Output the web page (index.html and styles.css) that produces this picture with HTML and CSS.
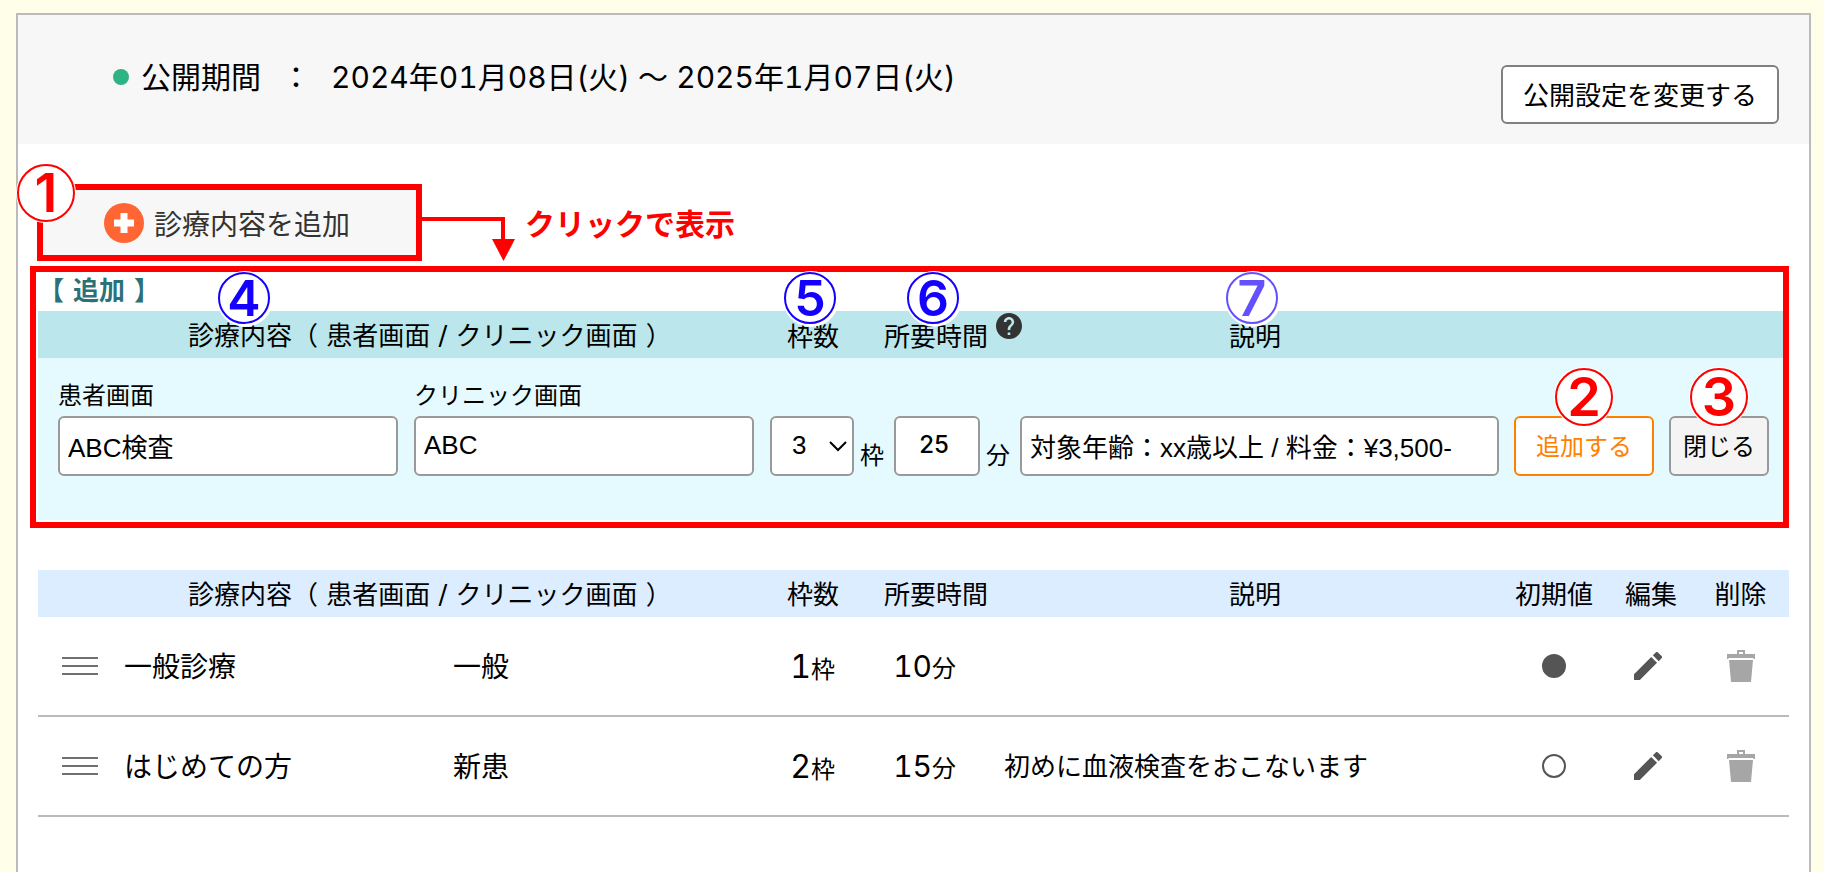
FILE: index.html
```
<!DOCTYPE html>
<html lang="ja">
<head>
    <meta charset="UTF-8">
    <meta name="viewport" content="width=device-width, initial-scale=1.0">
    <title>診療内容の設定</title>
    <link rel="stylesheet" href="styles.css">
</head>
<body>
    <main class="panel">
        <header class="period">
            <p class="period-text">
                <span class="dot"></span>
                <span>公開期間</span>
                <span class="colon">：</span>
                <span class="dates">2024年01月08日(火) 〜 2025年1月07日(火)</span>
            </p>
            <button type="button" class="btn period-btn">公開設定を変更する</button>
        </header>

        <div class="toolbar">
            <div class="add-wrap">
                <button type="button" class="add-btn">
                    <svg class="plus" viewBox="0 0 40 40" aria-hidden="true">
                        <circle cx="20" cy="20" r="20" fill="#ff6633"/>
                        <path d="M16.5 10h7v6.5H30v7h-6.5V30h-7v-6.5H10v-7h6.5z" fill="#fff"/>
                    </svg>
                    <span>診療内容を追加</span>
                </button>
                <span class="badge badge-red badge-add">1</span>
            </div>
            <svg class="arrow" viewBox="0 0 93 77" aria-hidden="true">
                <path d="M0 35h81v22" fill="none" stroke="#f00" stroke-width="4"/>
                <path d="M70 55h23L81.500 77z" fill="#f00"/>
            </svg>
            <strong class="note">クリックで表示</strong>
        </div>

        <section class="add-area">
            <h2 class="add-title">【 追加 】</h2>
            <div class="add-head">
                <div class="head-name">診療内容（ 患者画面 / クリニック画面 ）<span class="badge badge-blue badge-name">4</span></div>
                <div>枠数<span class="badge badge-blue">5</span></div>
                <div>所要時間<span class="badge badge-blue">6</span>
                    <svg class="help" viewBox="2 2 20 20" aria-label="ヘルプ"><path fill="#333" d="M12 2C6.480 2 2 6.480 2 12s4.480 10 10 10 10-4.480 10-10S17.520 2 12 2zm1 17h-2v-2h2v2zm2.070-7.750l-.9.920C13.450 12.900 13 13.500 13 15h-2v-.5c0-1.100.450-2.100 1.170-2.830l1.240-1.260c.370-.360.590-.860.590-1.410 0-1.100-.9-2-2-2s-2 .9-2 2H8c0-2.210 1.790-4 4-4s4 1.790 4 4c0 .880-.360 1.680-.930 2.250z"/></svg>
                </div>
                <div>説明<span class="badge badge-blue badge-light">7</span></div>
            </div>
            <form class="add-form">
                <div class="field">
                    <label for="patient-name">患者画面</label>
                    <input type="text" id="patient-name" value="ABC検査">
                </div>
                <div class="field">
                    <label for="clinic-name">クリニック画面</label>
                    <input type="text" id="clinic-name" value="ABC">
                </div>
                <div class="unit-field">
                    <div class="select-wrap">
                        <select id="slots">
                            <option>1</option>
                            <option>2</option>
                            <option selected>3</option>
                        </select>
                        <svg class="chevron" viewBox="0 0 18 12" aria-hidden="true"><path d="M1 2l8 8 8-8" fill="none" stroke="#000" stroke-width="2"/></svg>
                    </div>
                    <label for="slots">枠</label>
                </div>
                <div class="unit-field">
                    <input type="text" id="minutes" class="minutes" value="25">
                    <label for="minutes">分</label>
                </div>
                <input type="text" class="desc-input" aria-label="説明" value="対象年齢：xx歳以上 / 料金：¥3,500-">
                <div class="btn-wrap">
                    <button type="button" class="btn submit-btn">追加する</button>
                    <span class="badge badge-red">2</span>
                </div>
                <div class="btn-wrap">
                    <button type="button" class="btn close-btn">閉じる</button>
                    <span class="badge badge-red">3</span>
                </div>
            </form>
        </section>

        <table class="list">
            <colgroup>
                <col class="col-handle">
                <col class="col-patient">
                <col class="col-clinic">
                <col class="col-slots">
                <col class="col-time">
                <col>
                <col class="col-default">
                <col class="col-edit">
                <col class="col-delete">
            </colgroup>
            <thead>
                <tr>
                    <th colspan="3" class="head-name">診療内容（ 患者画面 / クリニック画面 ）</th>
                    <th>枠数</th>
                    <th>所要時間</th>
                    <th>説明</th>
                    <th>初期値</th>
                    <th>編集</th>
                    <th class="delete">削除</th>
                </tr>
            </thead>
            <tbody>
                <tr>
                    <td><span class="handle"></span></td>
                    <td class="name">一般診療</td>
                    <td class="name">一般</td>
                    <td class="slots"><b>1</b>枠</td>
                    <td class="time"><b>10</b>分</td>
                    <td class="desc"></td>
                    <td><input type="radio" name="default" aria-label="一般診療を初期値にする" checked></td>
                    <td class="edit">
                        <button type="button" class="icon-btn" aria-label="編集">
                            <svg width="28" height="28" viewBox="3 3 18 18"><path fill="#555" d="M3 17.250V21h3.750L17.810 9.940l-3.750-3.750L3 17.250zM20.710 7.040a1 1 0 0 0 0-1.410l-2.340-2.340a1 1 0 0 0-1.410 0l-1.830 1.830 3.750 3.750 1.830-1.830z"/></svg>
                        </button>
                    </td>
                    <td class="delete">
                        <button type="button" class="icon-btn" aria-label="削除">
                            <svg width="28" height="32" viewBox="0 0 28 32"><path fill="#a6a6a6" fill-rule="evenodd" d="M10 0h8v4h10v5h-1l-1-1H2L1 9H0V4h10zM12 2v2h4V2zM2 10h24l-2 22H4z"/></svg>
                        </button>
                    </td>
                </tr>
                <tr>
                    <td><span class="handle"></span></td>
                    <td class="name">はじめての方</td>
                    <td class="name">新患</td>
                    <td class="slots"><b>2</b>枠</td>
                    <td class="time"><b>15</b>分</td>
                    <td class="desc">初めに血液検査をおこないます</td>
                    <td><input type="radio" name="default" aria-label="はじめての方を初期値にする"></td>
                    <td class="edit">
                        <button type="button" class="icon-btn" aria-label="編集">
                            <svg width="28" height="28" viewBox="3 3 18 18"><path fill="#555" d="M3 17.250V21h3.750L17.810 9.940l-3.750-3.750L3 17.250zM20.710 7.040a1 1 0 0 0 0-1.410l-2.340-2.340a1 1 0 0 0-1.410 0l-1.830 1.830 3.750 3.750 1.830-1.830z"/></svg>
                        </button>
                    </td>
                    <td class="delete">
                        <button type="button" class="icon-btn" aria-label="削除">
                            <svg width="28" height="32" viewBox="0 0 28 32"><path fill="#a6a6a6" fill-rule="evenodd" d="M10 0h8v4h10v5h-1l-1-1H2L1 9H0V4h10zM12 2v2h4V2zM2 10h24l-2 22H4z"/></svg>
                        </button>
                    </td>
                </tr>
            </tbody>
        </table>
    </main>
</body>
</html>
```
FILE: styles.css
```
* {
    box-sizing: border-box;
}
body {
    margin: 0;
    padding: 13px 13px 0 16px;
    min-height: 100vh;
    display: flex;
    background-color: #fffee9;
    color: #000;
    font-family: Inter, "Noto Sans CJK JP", sans-serif;
    font-size: 26px;
}
button, input, select {
    font-family: "Liberation Sans", "Noto Sans CJK JP", sans-serif;
    font-size: 26px;
    color: #000;
}
button {
    cursor: pointer;
}
.panel {
    flex: 1;
    min-width: 0;
    border: 2px solid #bbb;
    border-bottom: none;
    background-color: #fff;
}

/* 公開期間 */
.period {
    display: flex;
    justify-content: space-between;
    align-items: flex-start;
    padding: 40px 30px 20px 95px;
    background-color: #f7f7f7;
}
.period-text {
    display: flex;
    align-items: center;
    margin: 0;
    font-size: 30px;
    line-height: 44px;
}
.dates {
    font-variant-numeric: tabular-nums;
}
.dot {
    width: 16px;
    height: 16px;
    margin-right: 12px;
    border-radius: 50%;
    background-color: #2eb384;
}
.colon {
    margin: 0 20px;
}
.btn {
    height: 60px;
    padding: 0 0 3px;
    border: 2px solid #999;
    border-radius: 6px;
    background-color: #fff;
    font-size: 24px;
}
.period-btn {
    width: 278px;
    margin-top: 10px;
    height: 59px;
    border-color: #808080;
    font-size: 26px;
}

/* 追加ボタン */
.toolbar {
    display: flex;
    align-items: center;
    margin: 40px 0 5px 19px;
}
.add-wrap {
    position: relative;
}
.add-btn {
    display: flex;
    align-items: center;
    gap: 10px;
    width: 385px;
    height: 77px;
    padding: 0 0 0 61px;
    border: 6px solid #f00;
    background-color: #f7f7f7;
    color: #333;
    font-size: 28px;
}
.plus {
    width: 40px;
    height: 40px;
}
.arrow {
    width: 93px;
    height: 77px;
}
.note {
    margin-left: 10px;
    padding-bottom: 2px;
    color: #f00;
    font-size: 30px;
}

/* 番号 */
.badge {
    position: absolute;
    left: 50%;
    display: flex;
    align-items: center;
    justify-content: center;
    border: 2px solid;
    border-radius: 50%;
    background-color: #fff;
    font-family: Inter, sans-serif;
    font-weight: 600;
    line-height: 1;
    transform: translateX(-50%);
}
.badge-red {
    top: -48px;
    width: 58px;
    height: 58px;
    color: #f00;
    font-size: 54px;
    box-shadow: 0 0 0 1px #fff;
}
.badge-blue {
    top: -39px;
    left: calc(50% - 3px);
    width: 52px;
    height: 52px;
    color: #1400ff;
    font-size: 50px;
    box-shadow: 1px 1px 0 2px #fff;
}
.badge-light {
    color: #6450ff;
}
.badge-add {
    top: -20px;
    left: 9px;
}
.badge-name {
    left: 206px;
}

/* 追加フォーム */
.add-area {
    margin: 0 20px 42px 12px;
    padding: 0 0 2px 2px;
    border: 6px solid #f00;
}
.add-title {
    margin: 0;
    color: #2a717a;
    font-family: "DejaVu Sans", "Noto Sans CJK JP", sans-serif;
    font-size: 26px;
    line-height: 39px;
}
.add-head {
    display: grid;
    grid-template-columns: 720px 110px 136px 1fr 277px;
    height: 47px;
    line-height: 51px;
    background-color: #bae6ec;
    text-align: center;
}
.add-head div {
    position: relative;
}
.add-head .head-name,
.list .head-name {
    padding-left: 150px;
    font-family: "DejaVu Sans", "Noto Sans CJK JP", sans-serif;
    text-align: left;
    white-space: nowrap;
}
.help {
    position: absolute;
    top: 2px;
    right: -18px;
    width: 26px;
    height: 26px;
}
.add-form {
    display: flex;
    align-items: flex-end;
    padding: 20px 14px 44px 20px;
    background-color: #e5faff;
}
.add-form input,
.add-form select {
    height: 60px;
    padding: 0 8px 2px;
    border: 2px solid #999;
    border-radius: 6px;
    background-color: #fff;
}
.field {
    display: flex;
    flex-direction: column;
    gap: 2px;
    width: 340px;
    margin-right: 16px;
    font-size: 24px;
    line-height: 36px;
}
.unit-field {
    display: flex;
    align-items: flex-end;
    gap: 6px;
    margin-right: 10px;
    font-size: 24px;
    line-height: 40px;
}
.select-wrap {
    position: relative;
    height: 60px;
}
.add-form select {
    width: 84px;
    padding-left: 20px;
    appearance: none;
}
.chevron {
    position: absolute;
    top: 24px;
    right: 7px;
    width: 18px;
    height: 12px;
    pointer-events: none;
}
.add-form .minutes {
    width: 86px;
    padding: 0 6px 4px 0;
    font-family: Inter, sans-serif;
    font-size: 24px;
    font-weight: 500;
    text-align: center;
}
.desc-input {
    flex: 1;
    min-width: 0;
}
.btn-wrap {
    position: relative;
    margin-left: 15px;
}
.submit-btn {
    width: 140px;
    border-color: #ff8000;
    color: #ff8000;
}
.close-btn {
    width: 100px;
    background-color: #f4f4f4;
}

/* 一覧 */
.list {
    width: calc(100% - 40px);
    margin: 0 20px;
    border-collapse: separate;
    border-spacing: 0;
    table-layout: fixed;
}
.col-handle {
    width: 86px;
}
.col-patient {
    width: 329px;
}
.col-clinic {
    width: 305px;
}
.col-slots {
    width: 110px;
}
.col-time {
    width: 136px;
}
.col-default {
    width: 96px;
}
.col-edit {
    width: 98px;
}
.col-delete {
    width: 89px;
}
.list th {
    height: 47px;
    padding: 3px 0 0;
    background-color: #dcedff;
    font-weight: normal;
    line-height: 44px;
}
.list td {
    height: 100px;
    padding: 0;
    border-bottom: 2px solid #bbb;
}
.list .delete {
    padding-right: 8px;
}
.list .edit {
    padding-right: 6px;
}
.handle {
    display: block;
    width: 36px;
    height: 18px;
    margin-left: 24px;
    border-top: 2px solid #707070;
    border-bottom: 2px solid #707070;
    background: linear-gradient(#707070, #707070) center / 100% 2px no-repeat;
}
.list .name {
    padding-bottom: 2px;
    font-size: 28px;
}
.list .desc {
    padding-bottom: 4px;
}
.slots,
.time {
    font-size: 24px;
    font-variant-numeric: tabular-nums;
    text-align: right;
}
.list .slots {
    padding-right: 33px;
}
.list .time {
    padding-right: 48px;
}
.slots b,
.time b {
    font-weight: normal;
    font-size: 32px;
}
.time b {
    font-size: 30px;
}
.list input {
    appearance: none;
    display: block;
    width: 24px;
    height: 24px;
    margin: 0 auto;
    border: 2px solid #555;
    border-radius: 50%;
}
.list input:checked {
    background-color: #555;
}
.icon-btn {
    display: block;
    margin: 0 auto;
    padding: 0;
    border: none;
    background: none;
}
.icon-btn svg {
    display: block;
}
```
